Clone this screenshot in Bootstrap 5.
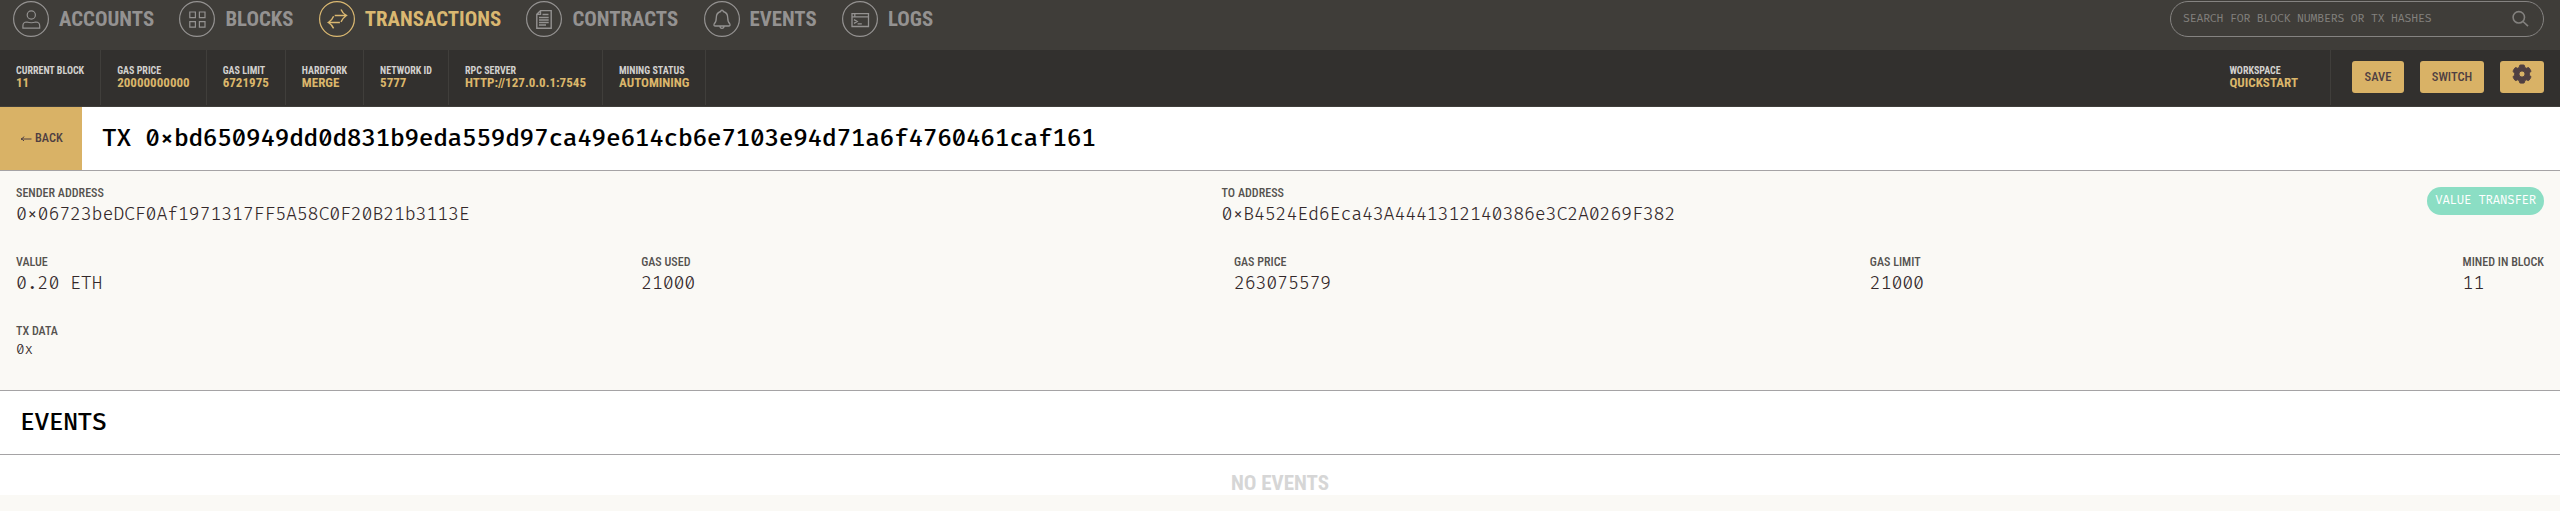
<!DOCTYPE html>
<html lang="en">
<head>
<meta charset="utf-8">
<title>Transaction</title>
<link href="https://cdn.jsdelivr.net/npm/bootstrap@5.3.0/dist/css/bootstrap.min.css" rel="stylesheet">
<style>
body{font-family:"Roboto Condensed",Roboto,"Liberation Sans",sans-serif;font-stretch:75%;background:#fff;color:#4a3d3f;overflow:hidden}
svg{fill:none;stroke:currentColor;flex:none}
.mono{font-family:"Fira Code","Liberation Mono",monospace;font-stretch:100%;letter-spacing:-.0154em;white-space:pre}
.topnav{height:50px;background:#3f3d39;padding:1px 16px 0 13px}
.topnav ul{gap:25.3px}
.topnav a{gap:10px;height:36px;color:#949291;font-size:20.8px;font-weight:700;line-height:36px;text-decoration:none}
.topnav a.active{color:#dab871}
.finder{width:374px;height:36px;border:1px solid #858381;color:#83817e;font-size:11.2px;padding:0 14px 0 12px}
.infobar{height:57px;background:#32302e;border-bottom:1px solid #403e3a;padding-right:16px}
.cell{height:55px;padding:15px 16px 0;border-right:1px solid #403e3b;font-weight:700;white-space:nowrap}
.cell dt{font-size:10px;line-height:11px;color:#d2d0ce}
.cell dd{font-size:13.06px;line-height:13px;color:#dab66b;margin:0}
.cell.workspace{padding-right:32px}
.tools{padding:11px 0 0 21px}
.gold{background:#d9b266;color:#4f3f42;border:0;border-radius:3px;height:32px;padding:0;font-size:12.5px;font-weight:500;line-height:32px}
.gold:hover{background:#d9b266}
.w-save{width:52px}
.w-switch{width:64px}
.w-gear{width:44px}
.w-gear svg{margin-top:3px}
.band{height:64px;border-bottom:1px solid #a5a3a5;background:#fff}
.band h1,.band h2{font-size:24px;font-weight:500;line-height:64px;color:#000;margin:0;height:63px;padding-left:20px}
.back{width:82px;height:63px;background:#d9b266;color:#4f3f42;font-size:12.3px;font-weight:500;text-decoration:none;line-height:62px;padding-left:20px}
.back svg{margin:25px 3px 0 0}
.details{height:220px;background:#faf9f5;border-bottom:1px solid #a5a3a5;padding:15px 16px 0}
.details .line{height:69px}
.details dt{font-size:12.06px;font-weight:500;line-height:14px;color:#55524f}
.details dd{font-size:18px;font-weight:300;line-height:22px;margin:4px 0 0;color:#33282a}
.details dd.data{font-size:14px;line-height:18px;margin-top:3px}
.pill{height:28px;background:#8bdec4;color:#fff;font-size:12px;line-height:27px;padding:0 8px;margin-top:1px}
.none{height:40px;color:#d6d6d6;font-size:21px;font-weight:700;line-height:24px;padding-top:16px}
.foot{height:16px;background:#faf9f5}
</style>
</head>
<body>
<header>
<nav class="topnav d-flex justify-content-between align-items-start">
<ul class="d-flex list-unstyled m-0">
<li><a href="#" class="d-flex"><svg width="36" height="36" stroke-width="1.2"><circle cx="18" cy="18" r="17.4"/><circle cx="18.3" cy="14" r="4.1"/><path d="M9.9 27.1v-2.2q0-3.9 4-3.9 4.4 1.5 8.8 0 4 0 4 3.9v2.2z"/></svg>ACCOUNTS</a></li>
<li><a href="#" class="d-flex"><svg width="36" height="36" stroke-width="1.2"><circle cx="18" cy="18" r="17.4"/><path d="M10.8 11h5.6v5.6h-5.6zM20.4 11h5.6v5.6h-5.6zM10.8 20.6h5.6v5.6h-5.6zM20.4 20.6h5.6v5.6h-5.6z"/></svg>BLOCKS</a></li>
<li><a href="#" class="d-flex active"><svg width="36" height="36" stroke-width="1.2"><circle cx="18" cy="18" r="17.4"/><path stroke-width="1.4" d="M15.7 14.5h11.4M22 8.6q1.6 4 5.4 5.9-3.2 2.2-5.4 6.3M20.9 21.5H9.4M14.6 15.3q-1.6 4.2-5.3 6.2 3.400 1.900 5.300 5.900"/></svg>TRANSACTIONS</a></li>
<li><a href="#" class="d-flex"><svg width="36" height="36" stroke-width="1.2"><circle cx="18" cy="18" r="17.4"/><path stroke-width="1.4" d="M14.5 9.6h10.7v17.6H10.8V13.400zM14.500 9.600v3.800h-3.700"/><path stroke-width="1.3" d="M16.500 13.500h6M13 16.500h9.700M13 19h9.700M13 21.500h9.700M13 24h7"/></svg>CONTRACTS</a></li>
<li><a href="#" class="d-flex"><svg width="36" height="36" stroke-width="1.3"><circle cx="18" cy="18" r="17.4" stroke-width="1.2"/><path d="M16.700 10.500q0-1.300 1.300-1.300t1.300 1.300q4.400 1.200 4.400 6.100 0 4.600 2.200 6.500.6 1.900-1.300 1.900H11.400q-1.900 0-1.300-1.900 2.200-1.900 2.200-6.500 0-4.900 4.400-6.100zM15.800 25q.3 2.400 2.200 2.400t2.200-2.400"/></svg>EVENTS</a></li>
<li><a href="#" class="d-flex"><svg width="36" height="36" stroke-width="1.3"><circle cx="18" cy="18" r="17.4" stroke-width="1.2"/><path d="M10 12.600h16.500v12.900H10zM10 15.900h16.500M12.800 12.600v3M12 18.600l3.200 1.900-3.200 1.900M15.600 22.900h4.200"/></svg>LOGS</a></li>
</ul>
<div class="finder rounded-pill d-flex align-items-center justify-content-between"><span class="mono">SEARCH FOR BLOCK NUMBERS OR TX HASHES</span><svg width="18" height="18" stroke="#858381" stroke-width="1.6"><circle cx="7.8" cy="7.3" r="5.7"/><path d="M12 11.5l5 4.6"/></svg></div>
</nav>
<div class="infobar d-flex justify-content-between">
<div class="d-flex">
<dl class="cell m-0"><dt>CURRENT BLOCK</dt><dd>11</dd></dl>
<dl class="cell m-0"><dt>GAS PRICE</dt><dd>20000000000</dd></dl>
<dl class="cell m-0"><dt>GAS LIMIT</dt><dd>6721975</dd></dl>
<dl class="cell m-0"><dt>HARDFORK</dt><dd>MERGE</dd></dl>
<dl class="cell m-0"><dt>NETWORK ID</dt><dd>5777</dd></dl>
<dl class="cell m-0"><dt>RPC SERVER</dt><dd>HTTP://127.0.0.1:7545</dd></dl>
<dl class="cell m-0"><dt>MINING STATUS</dt><dd>AUTOMINING</dd></dl>
</div>
<div class="d-flex">
<dl class="cell workspace m-0"><dt>WORKSPACE</dt><dd>QUICKSTART</dd></dl>
<div class="tools d-flex gap-3">
<button class="btn gold w-save">SAVE</button>
<button class="btn gold w-switch">SWITCH</button>
<button class="btn gold w-gear d-flex justify-content-center" aria-label="Settings"><svg width="20" height="20" stroke="none"><path fill="#4f3f42" fill-rule="evenodd" d="M7.5 1.8Q7.6 1 8.5 1h3q.9 0 1 .8l.3 1.7 1.5.8 1.7-.6q.8-.3 1.3.5l1.4 2.4q.4.8-.2 1.4l-1.2 1.2v1.8l1.2 1.1q.6.6.2 1.4l-1.4 2.4q-.5.8-1.3.5l-1.7-.6-1.5.8-.3 1.7q-.1.8-1 .8h-3q-.9 0-1-.8l-.3-1.7-1.5-.8-1.7.6q-.8.3-1.3-.5l-1.4-2.4q-.4-.8.2-1.4L2.7 11V9.2L1.500 8q-.6-.6-.2-1.400l1.400-2.400q.5-.8 1.300-.5l1.700.6 1.500-.8zM10 6.900a3.100 3.100 0 1 0 0 6.200 3.100 3.100 0 0 0 0-6.200z"/></svg></button>
</div>
</div>
</div>
</header>
<main>
<div class="band d-flex"><a href="#" class="back d-flex"><svg width="12" height="12"><path d="M11.500 7H1M4 4.500Q3 6.500 1 7q2 .5 3 2"/></svg>BACK</a><h1 class="mono">TX 0×bd650949dd0d831b9eda559d97ca49e614cb6e7103e94d71a6f4760461caf161</h1></div>
<section class="details">
<div class="line d-flex justify-content-between align-items-start">
<dl class="m-0"><dt>SENDER ADDRESS</dt><dd class="mono">0×06723beDCF0Af1971317FF5A58C0F20B21b3113E</dd></dl>
<dl class="m-0"><dt>TO ADDRESS</dt><dd class="mono">0×B4524Ed6Eca43A4441312140386e3C2A0269F382</dd></dl>
<span class="pill mono rounded-pill">VALUE TRANSFER</span>
</div>
<div class="line d-flex justify-content-between">
<dl class="m-0"><dt>VALUE</dt><dd class="mono">0.20 ETH</dd></dl>
<dl class="m-0"><dt>GAS USED</dt><dd class="mono">21000</dd></dl>
<dl class="m-0"><dt>GAS PRICE</dt><dd class="mono">263075579</dd></dl>
<dl class="m-0"><dt>GAS LIMIT</dt><dd class="mono">21000</dd></dl>
<dl class="m-0"><dt>MINED IN BLOCK</dt><dd class="mono">11</dd></dl>
</div>
<dl class="m-0"><dt>TX DATA</dt><dd class="mono data">0x</dd></dl>
</section>
<div class="band"><h2 class="mono">EVENTS</h2></div>
<div class="none text-center">NO EVENTS</div>
<div class="foot"></div>
</main>
<script src="https://cdn.jsdelivr.net/npm/bootstrap@5.3.0/dist/js/bootstrap.bundle.min.js"></script>
</body>
</html>
